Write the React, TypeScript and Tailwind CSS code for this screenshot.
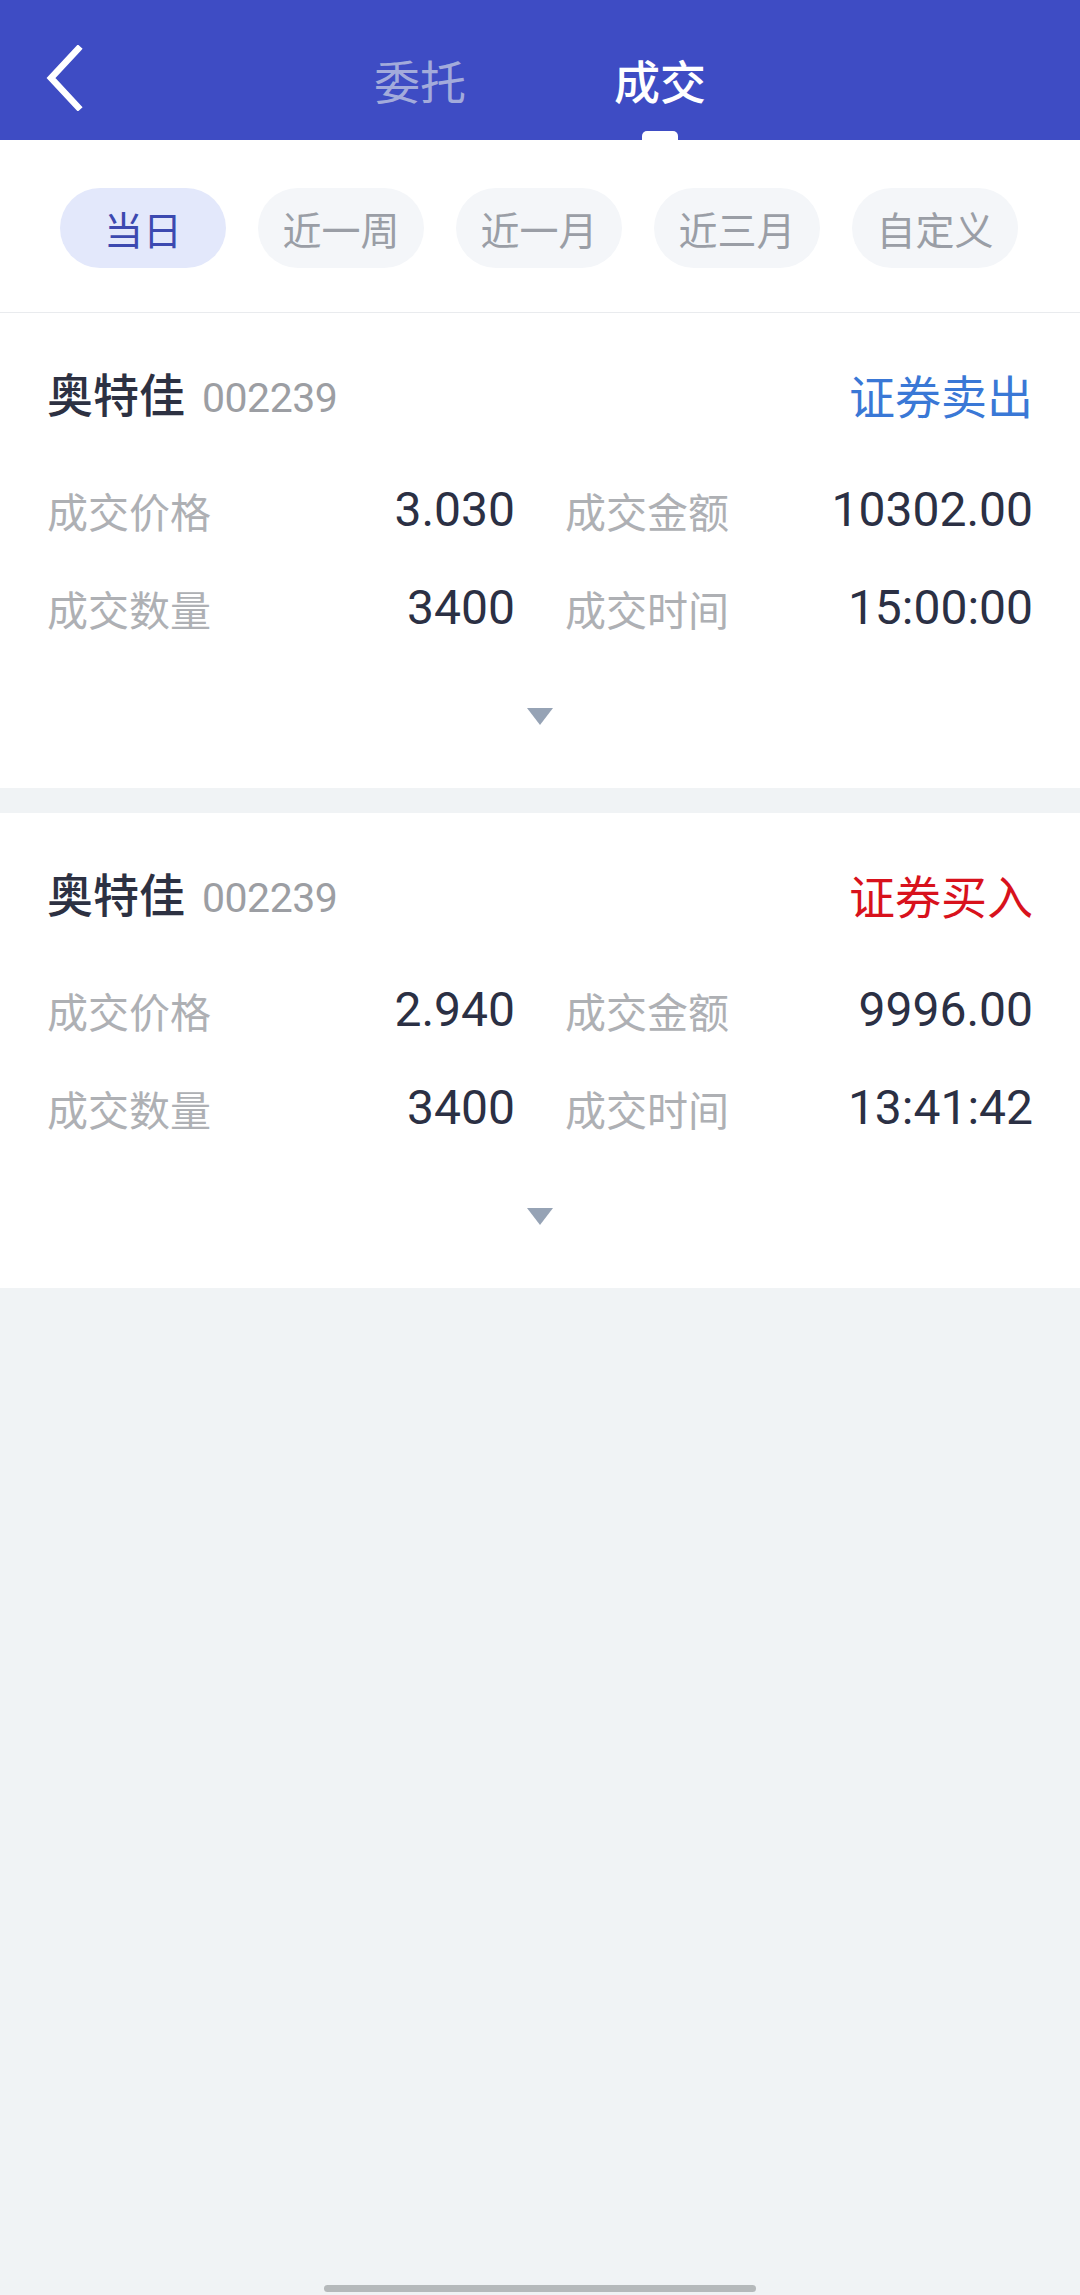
import React from 'react';

interface Trade {
  name: string;
  code: string;
  side: 'sell' | 'buy';
  price: string;
  amount: string;
  qty: string;
  time: string;
}

const TRADES: Trade[] = [
  { name: '奥特佳', code: '002239', side: 'sell', price: '3.030', amount: '10302.00', qty: '3400', time: '15:00:00' },
  { name: '奥特佳', code: '002239', side: 'buy', price: '2.940', amount: '9996.00', qty: '3400', time: '13:41:42' },
];

const RANGES = ['当日', '近一周', '近一月', '近三月', '自定义'];

const cjk = { fontFamily: '"Noto Sans CJK SC", "Noto Sans", sans-serif' };
const num = { fontFamily: 'Roboto, "Noto Sans", sans-serif' };

const BackIcon = () => (
  <svg width="40" height="66" viewBox="0 0 40 66" fill="none">
    <path d="M33 4 L6 33 L33 62" stroke="white" strokeWidth="6.5" strokeLinecap="square" strokeLinejoin="miter" />
  </svg>
);

const Header = () => (
  <div className="h-[140px] bg-[#3e4cc4] grid grid-cols-[1fr_auto_1fr]">
    <div className="flex items-start pt-[45px] pl-[45px]">
      <BackIcon />
    </div>
    <div className="flex gap-[148px]" style={cjk}>
      <div className="flex flex-col items-center pt-[55px]">
        <span className="text-[46px] leading-[48px] text-[#a3abdb]">委托</span>
      </div>
      <div className="flex flex-col items-center pt-[55px]">
        <span className="text-[46px] leading-[48px] text-white font-medium">成交</span>
        <div className="mt-[28px] w-[36px] h-[9px] bg-white rounded-t-[5px]" />
      </div>
    </div>
    <div />
  </div>
);

const RangeFilter = () => (
  <div className="bg-white pt-[48px] pb-[44px] border-b border-[#e9ebee]">
    <div className="flex gap-[32px] px-[60px]" style={cjk}>
      {RANGES.map((r, i) => (
        <div
          key={r}
          className={`w-[166px] h-[80px] rounded-full flex items-center justify-center text-[39px] leading-none ${
            i === 0 ? 'bg-[#e3e8fb] text-[#3c49b0]' : 'bg-[#f4f6f9] text-[#9a9ea6]'
          }`}
        >
          {r}
        </div>
      ))}
    </div>
  </div>
);

const Cell = ({ label, value }: { label: string; value: string }) => (
  <div className="flex items-center justify-between h-[98px]">
    <span className="text-[41px] leading-none text-[#aeb0b4]" style={cjk}>{label}</span>
    <span className="text-[48px] leading-none text-[#2b3044]" style={num}>{value}</span>
  </div>
);

const TradeCard = ({ trade }: { trade: Trade }) => (
  <div className="bg-white px-[47px]">
    <div className="pt-[40px] h-[122px] flex items-center justify-between">
      <div className="flex items-baseline">
        <span className="text-[46px] leading-none font-medium text-[#2d3142]" style={cjk}>{trade.name}</span>
        <span className="ml-[17px] text-[41px] leading-none text-[#9c9ea3] tracking-[-0.5px]" style={num}>{trade.code}</span>
      </div>
      <span
        className={`text-[46px] leading-none ${trade.side === 'sell' ? 'text-[#3a78d6]' : 'text-[#d8121c]'}`}
        style={cjk}
      >
        {trade.side === 'sell' ? '证券卖出' : '证券买入'}
      </span>
    </div>
    <div className="mt-[26px] grid grid-cols-2 gap-x-[50px]">
      <Cell label="成交价格" value={trade.price} />
      <Cell label="成交金额" value={trade.amount} />
      <Cell label="成交数量" value={trade.qty} />
      <Cell label="成交时间" value={trade.time} />
    </div>
    <div className="h-[131px] pt-[51px] flex justify-center">
      <svg width="26" height="17" viewBox="0 0 26 17">
        <path d="M0 0 H26 L13 17 Z" fill="#96a3b5" />
      </svg>
    </div>
  </div>
);

export default function App() {
  return (
    <div className="min-h-screen bg-[#f0f3f5] flex flex-col">
      <Header />
      <RangeFilter />
      <div className="flex flex-col gap-[25px]">
        {TRADES.map((t, i) => (
          <TradeCard key={i} trade={t} />
        ))}
      </div>
      <div className="mt-auto pb-[3px] flex justify-center">
        <div className="w-[432px] h-[7px] rounded-full bg-[#b5b9bb]" />
      </div>
    </div>
  );
}
